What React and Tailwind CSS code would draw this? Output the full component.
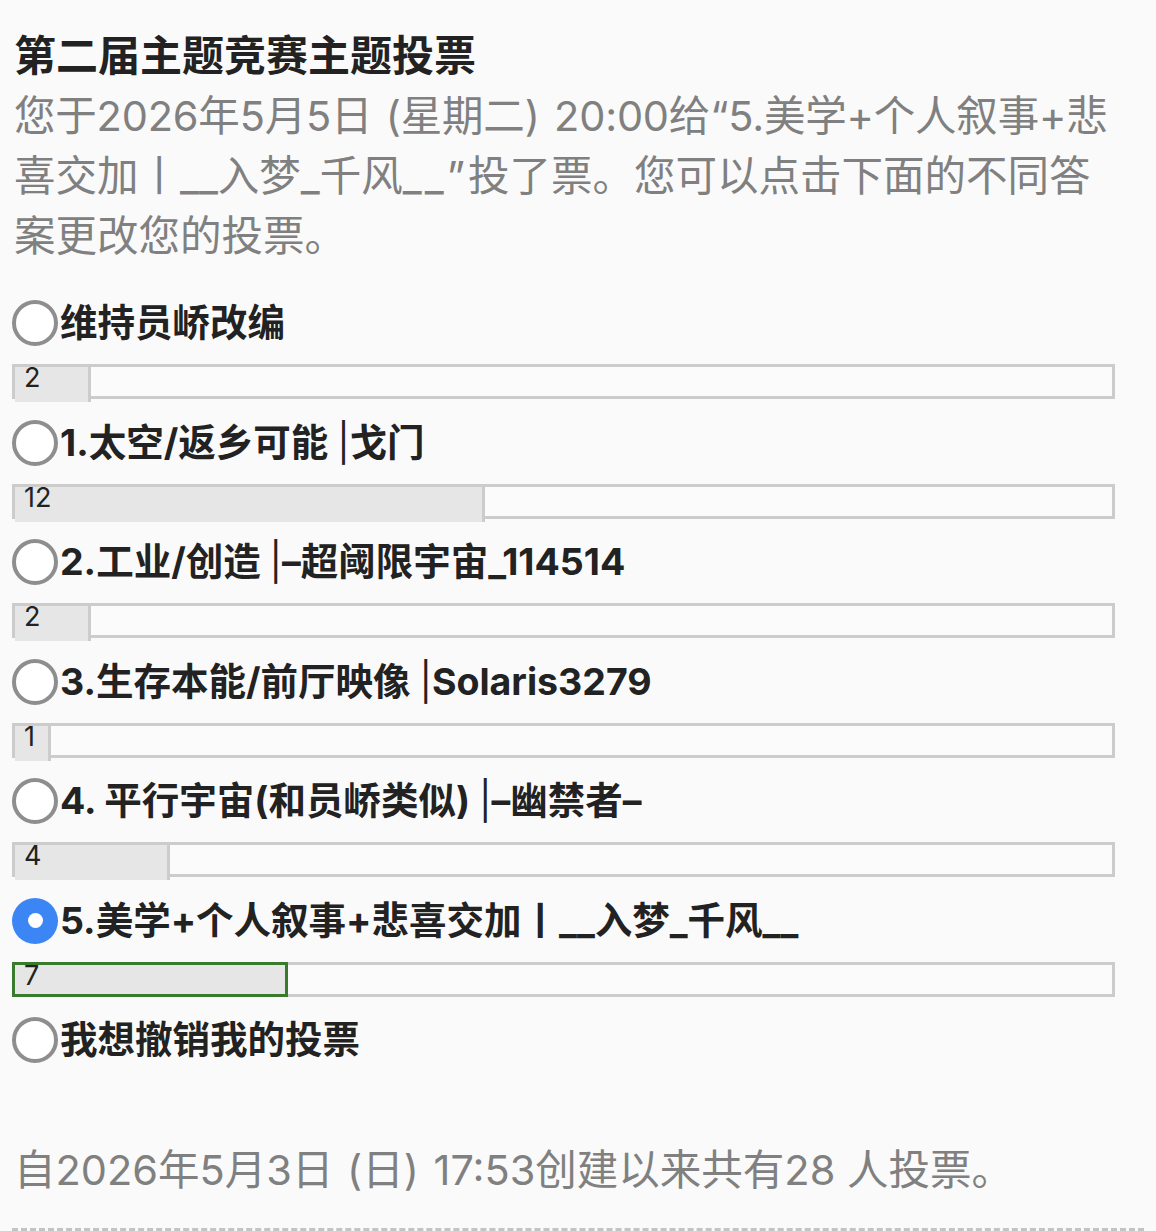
import React from "react";

const TOTAL = 28;
const BAR_W = 1103;

const options = [
  { label: "维持员峤改编", votes: 2 },
  { label: "1.太空/返乡可能 |戈门", votes: 12 },
  { label: "2.工业/创造 |–超阈限宇宙_114514", votes: 2 },
  { label: "3.生存本能/前厅映像 |Solaris3279", votes: 1 },
  { label: "4. 平行宇宙(和员峤类似) |–幽禁者–", votes: 4 },
  { label: "5.美学+个人叙事+悲喜交加丨__入梦_千风__", votes: 7, selected: true },
  { label: "我想撤销我的投票", votes: null },
];

function Radio({ checked }) {
  if (checked) {
    return (
      <div className="w-[46px] h-[46px] rounded-full bg-[#3b86f4] flex items-center justify-center shrink-0">
        <div className="w-[15px] h-[15px] rounded-full bg-white" />
      </div>
    );
  }
  return <div className="w-[46px] h-[46px] rounded-full border-[4px] border-[#8e8e8e] bg-white shrink-0" />;
}

function Bar({ votes, selected }) {
  const full = (votes / TOTAL) * BAR_W;
  return (
    <div className="relative w-[1103px] h-[35px] border-[3px] border-[#cccccc] bg-[#fbfbfb]">
      {selected ? (
        <div
          className="absolute left-[-3px] top-[-3px] h-[35px] bg-[#e6e6e6] border-[3px] border-[#3a7a2c]"
          style={{ width: `${full}px` }}
        >
          <span className="block pl-[9px] text-[27px] leading-[22px] text-[#222]">{votes}</span>
        </div>
      ) : (
        <div
          className="absolute left-0 top-0 h-[35px] bg-[#e6e6e6] border-r-[3px] border-[#cccccc]"
          style={{ width: `${full - 3}px` }}
        >
          <span className="block pl-[9px] text-[27px] leading-[22px] text-[#222]">{votes}</span>
        </div>
      )}
    </div>
  );
}

function Paren({ children }) {
  return (
    <>
      <span className="inline-block ml-[2px] whitespace-pre"> (</span>
      {children}
      <span className="inline-block mr-[3px] whitespace-pre">) </span>
    </>
  );
}

function Label({ text }) {
  const idx = text.indexOf("|");
  if (idx < 0) return text;
  return (
    <>
      {text.slice(0, idx)}
      <span className="font-normal">|</span>
      {text.slice(idx + 1)}
    </>
  );
}

export default function App() {
  return (
    <div
      className="min-h-screen bg-[#fafafa] px-[12px] pt-[26px]"
      style={{ fontFamily: 'Inter, "Noto Sans CJK SC", sans-serif' }}
    >
      <h1 className="pl-[2px] text-[42px] leading-[60px] font-bold text-[#222222] whitespace-nowrap">
        第二届主题竞赛主题投票
      </h1>
      <p className="pl-[2px] text-[41.5px] leading-[60px] text-[#808080]">
        <span className="block whitespace-nowrap tracking-[-0.2px]">
          您于2026年5月5日<Paren>星期二</Paren>20:00给“5.美学+个人叙事+悲
        </span>
        <span className="block whitespace-nowrap">
          喜交加丨__入梦_千风<span className="tracking-[3px]">__”</span>投了票。您可以点击下面的不同答
        </span>
        <span className="block whitespace-nowrap">案更改您的投票。</span>
      </p>

      <div className="mt-[34px] flex flex-col">
        {options.map((o, i) => (
          <div key={i} className={o.votes !== null ? "mb-[20.5px]" : ""}>
            <div className="flex items-center h-[46px]">
              <Radio checked={o.selected} />
              <span className="ml-[2px] text-[37.5px] leading-[46px] font-bold text-[#222222] whitespace-nowrap">
                <Label text={o.label} />
              </span>
            </div>
            {o.votes !== null && (
              <div className="mt-[18px]">
                <Bar votes={o.votes} selected={o.selected} />
              </div>
            )}
          </div>
        ))}
      </div>

      <p className="mt-[77px] pl-[2px] text-[41.5px] leading-[60px] text-[#808080] whitespace-nowrap">
        自2026年5月3日<Paren>日</Paren>17:53创建以来共有28 人投票。
      </p>
      <div className="mt-[28px] border-t-[3px] border-dashed border-[#c4c4c4] h-[20px]" />
    </div>
  );
}
